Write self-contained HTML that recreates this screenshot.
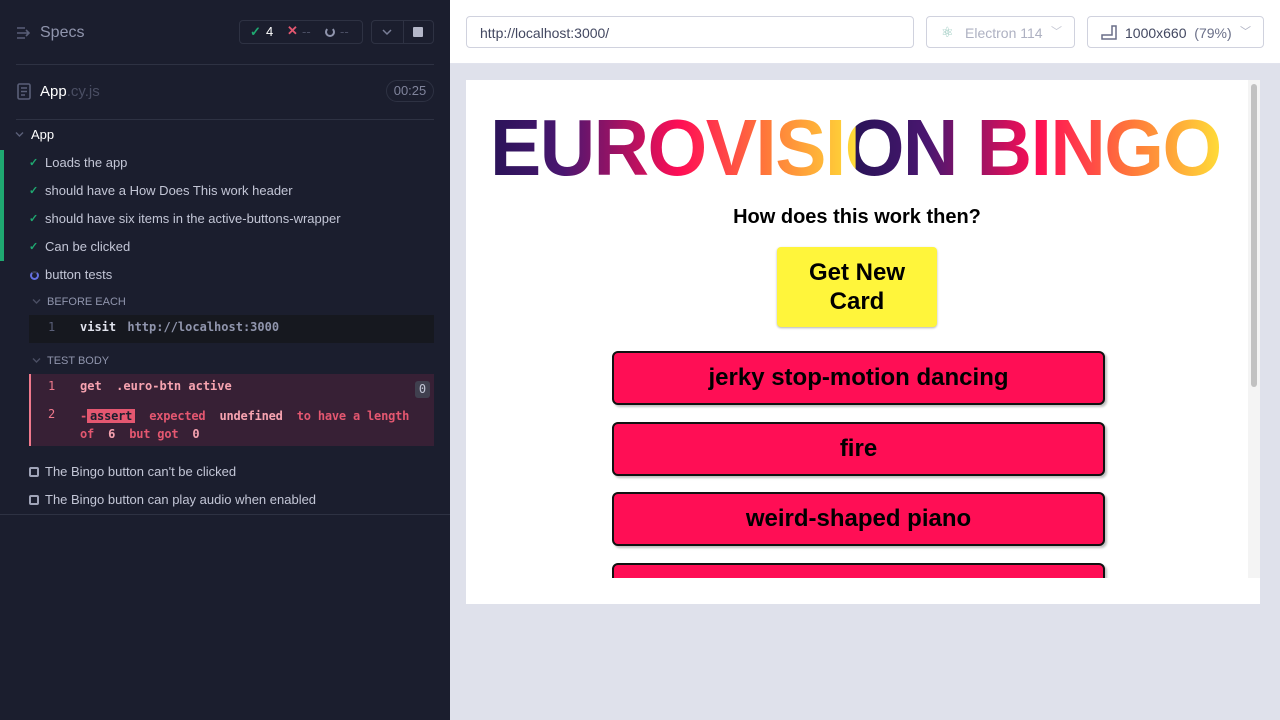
<!DOCTYPE html>
<html><head><meta charset="utf-8"><style>
*{margin:0;padding:0;box-sizing:border-box}
body{width:1280px;height:720px;overflow:hidden;font-family:"Liberation Sans",sans-serif;background:#dfe1eb;position:relative}
.side{position:absolute;left:0;top:0;width:450px;height:720px;background:#1b1e2e;color:#bfc2d4}
.abs{position:absolute}
.hr{position:absolute;left:16px;right:16px;height:1px;background:#2e3243}
.row{position:absolute;left:45px;font-size:13px;color:#c3c6d6;white-space:nowrap}
.chk{position:absolute;left:29px;color:#1fa971;font-size:11px;font-weight:bold}
.mono{font-family:"DejaVu Sans Mono","Liberation Mono",monospace;font-size:12px;font-weight:bold}
.pill{position:absolute;border:1px solid #d0d2de;border-radius:4px;background:#fff;height:32px;top:16px;font-size:14px}
.btn{position:absolute;left:612px;width:493px;height:54px;background:#ff0e55;border:2px solid #111;border-radius:6px;box-shadow:2px 2px 2px rgba(0,0,0,.25);font-weight:bold;font-size:24px;text-align:center;line-height:50px;color:#000}
</style></head><body>
<div class="side">
 <svg class="abs" style="left:16px;top:26px" width="16" height="14" viewBox="0 0 16 14"><path d="M1 2h8M1 7h12M1 12h8M10 4l3 3-3 3" stroke="#5a5f78" stroke-width="1.6" fill="none"/></svg>
 <div class="abs" style="left:40px;top:24px;font-size:16px;color:#9095ad">Specs</div>
 <div class="abs" style="left:239px;top:20px;width:124px;height:24px;border:1px solid #2e3243;border-radius:4px;font-size:13px">
  <span class="abs" style="left:10px;top:3px;color:#1fa971;font-weight:bold">✓</span>
  <span class="abs" style="left:26px;top:3px;color:#fff">4</span>
  <span class="abs" style="left:47px;top:2px;color:#e45770;font-weight:bold">✕</span>
  <span class="abs" style="left:62px;top:3px;color:#4a4e63">--</span>
  <span class="abs" style="left:85px;top:6px;width:10px;height:10px;border:2px solid #9095ad;border-radius:50%;border-top-color:transparent"></span>
  <span class="abs" style="left:100px;top:3px;color:#4a4e63">--</span>
 </div>
 <div class="abs" style="left:371px;top:20px;width:63px;height:24px;border:1px solid #2e3243;border-radius:4px">
  <div class="abs" style="left:31px;top:0;width:1px;height:22px;background:#2e3243"></div>
  <svg class="abs" style="left:10px;top:7px" width="10" height="8"><path d="M1 2l4 4 4-4" stroke="#7a7f98" stroke-width="1.5" fill="none"/></svg>
  <div class="abs" style="left:41px;top:6px;width:10px;height:10px;background:#b4b7c8;border-radius:1px"></div>
 </div>
 <div class="hr" style="top:64px"></div>
 <svg class="abs" style="left:17px;top:83px" width="14" height="17"><rect x="1" y="1" width="12" height="15" rx="1.5" fill="none" stroke="#5a5f78" stroke-width="1.6"/><path d="M4 5h6M4 8.5h6M4 12h4" stroke="#5a5f78" stroke-width="1.4"/></svg>
 <div class="abs" style="left:40px;top:83px;font-size:15px;color:#fff">App<span style="color:#4a4e63">.cy.js</span></div>
 <div class="abs" style="left:386px;top:80px;width:48px;height:22px;border:1px solid #2e3243;border-radius:11px;font-size:13px;color:#80849c;text-align:center;line-height:20px">00:25</div>
 <div class="hr" style="top:119px"></div>
 <svg class="abs" style="left:15px;top:131px" width="9" height="7"><path d="M1 1.5l3.5 3.5 3.5-3.5" stroke="#5a5f78" stroke-width="1.4" fill="none"/></svg>
 <div class="abs" style="left:31px;top:127px;font-size:13px;color:#fff">App</div>
 <div class="abs" style="left:0;top:150px;width:4px;height:111px;background:#1fa971"></div>
 <span class="chk" style="top:156px">✓</span><div class="row" style="top:155px">Loads the app</div>
 <span class="chk" style="top:184px">✓</span><div class="row" style="top:183px">should have a How Does This work header</div>
 <span class="chk" style="top:212px">✓</span><div class="row" style="top:211px">should have six items in the active-buttons-wrapper</div>
 <span class="chk" style="top:240px">✓</span><div class="row" style="top:239px">Can be clicked</div>
 <div class="abs" style="left:30px;top:271px;width:9px;height:9px;border:2px solid #6470e0;border-radius:50%;border-top-color:#3b3f55"></div>
 <div class="row" style="top:267px">button tests</div>
 <svg class="abs" style="left:32px;top:298px" width="9" height="7"><path d="M1 1.5l3.5 3.5 3.5-3.5" stroke="#4a4e63" stroke-width="1.4" fill="none"/></svg>
 <div class="abs" style="left:47px;top:296px;font-size:11px;color:#9095ad">BEFORE EACH</div>
 <div class="abs" style="left:29px;top:315px;width:405px;height:28px;background:#16181f"></div>
 <div class="abs mono" style="left:48px;top:320px;color:#5a5f78;font-weight:normal">1</div>
 <div class="abs mono" style="left:80px;top:320px;color:#e1e3ed">visit <span style="color:#9095ad;margin-left:4px">http://localhost:3000</span></div>
 <svg class="abs" style="left:32px;top:357px" width="9" height="7"><path d="M1 1.5l3.5 3.5 3.5-3.5" stroke="#4a4e63" stroke-width="1.4" fill="none"/></svg>
 <div class="abs" style="left:47px;top:355px;font-size:11px;color:#9095ad">TEST BODY</div>
 <div class="abs" style="left:29px;top:374px;width:405px;height:72px;background:#372035;border-left:2px solid #f0798c"></div>
 <div class="abs mono" style="left:48px;top:379px;color:#f0798c;font-weight:normal">1</div>
 <div class="abs mono" style="left:80px;top:379px;color:#f7a3b0">get &nbsp;.euro-btn active</div>
 <div class="abs mono" style="left:415px;top:381px;width:15px;height:17px;background:#40404f;border-radius:3px;color:#c3c6d6;text-align:center;line-height:17px;font-weight:normal">0</div>
 <div class="abs mono" style="left:48px;top:407px;color:#f0798c;font-weight:normal">2</div>
 <div class="abs mono" style="left:80px;top:407px;color:#e45770;line-height:18px;width:345px;letter-spacing:-0.2px">-<span style="background:#e45770;color:#1b1e2e;padding:0 3px">assert</span>&nbsp; expected &nbsp;<span style="color:#f7a3b0">undefined</span>&nbsp; to have a length of &nbsp;<span style="color:#f7a3b0">6</span>&nbsp; but got &nbsp;<span style="color:#f7a3b0">0</span></div>
 <div class="abs" style="left:29px;top:467px;width:10px;height:10px;border:2px solid #a0a4b8;border-radius:2px"></div>
 <div class="row" style="top:464px">The Bingo button can't be clicked</div>
 <div class="abs" style="left:29px;top:495px;width:10px;height:10px;border:2px solid #a0a4b8;border-radius:2px"></div>
 <div class="row" style="top:492px">The Bingo button can play audio when enabled</div>
 <div class="abs" style="left:0;top:514px;width:450px;height:1px;background:#2e3243"></div>
</div>
<div class="abs" style="left:450px;top:0;width:830px;height:64px;background:#fff;border-bottom:1px solid #e1e3ed"></div>
<div class="pill" style="left:466px;width:448px"><span class="abs" style="left:13px;top:8px;color:#434861">http://localhost:3000/</span></div>
<div class="pill" style="left:926px;width:149px"><span class="abs" style="left:14px;top:7px;color:#8fc4b8;font-size:14px">⚛</span><span class="abs" style="left:38px;top:8px;color:#aeb1c2">Electron 114</span><span class="abs" style="left:124px;top:6px;color:#c4c6d2;font-size:11px">﹀</span></div>
<div class="pill" style="left:1087px;width:177px"><svg class="abs" style="left:13px;top:8px" width="16" height="15"><path d="M1 14h14V1h-4v9H1z" fill="none" stroke="#6a6f88" stroke-width="1.5"/></svg><span class="abs" style="left:37px;top:8px;color:#434861">1000x660 &nbsp;<span style="color:#6a6f88">(79%)</span></span><span class="abs" style="left:152px;top:6px;color:#aeb1c2;font-size:11px">﹀</span></div>
<div class="abs" style="left:466px;top:80px;width:794px;height:524px;background:#fff;overflow:hidden">
 <div class="abs" style="left:782px;top:0;width:12px;height:498px;background:#f4f4f4"><div style="margin:4px 3px;width:6px;height:303px;background:#c1c1c1;border-radius:3px"></div></div>
 <div class="abs" style="left:24px;top:22px;font-size:80px;font-weight:bold;letter-spacing:-1.6px;line-height:92px;white-space:nowrap;transform:scaleX(0.96);transform-origin:0 0;color:transparent;background:linear-gradient(90deg,#2a1458 0%,#4a1670 10%,#ff0e55 26%,#ff7a3a 38%,#ffdc38 50%,#2a1458 50.1%,#4a1670 60%,#ff0e55 75%,#ff7a3a 88%,#ffdc38 100%);-webkit-background-clip:text;background-clip:text">EUROVISION BINGO</div>
 <div class="abs" style="left:0;top:126px;width:782px;text-align:center;font-size:20px;font-weight:bold;color:#000">How does this work then?</div>
 <div class="abs" style="left:311px;top:167px;width:160px;height:80px;background:#fff53b;border-radius:4px;box-shadow:0 1px 2px rgba(0,0,0,.3);font-size:24px;font-weight:bold;text-align:center;line-height:29px;padding-top:11px">Get New<br>Card</div>
</div>
<div style="position:absolute;left:466px;top:80px;width:782px;height:498px;overflow:hidden">
 <div class="btn" style="left:146px;top:271px">jerky stop-motion dancing</div>
 <div class="btn" style="left:146px;top:342px">fire</div>
 <div class="btn" style="left:146px;top:412px">weird-shaped piano</div>
 <div class="btn" style="left:146px;top:483px"></div>
</div>
</body></html>
